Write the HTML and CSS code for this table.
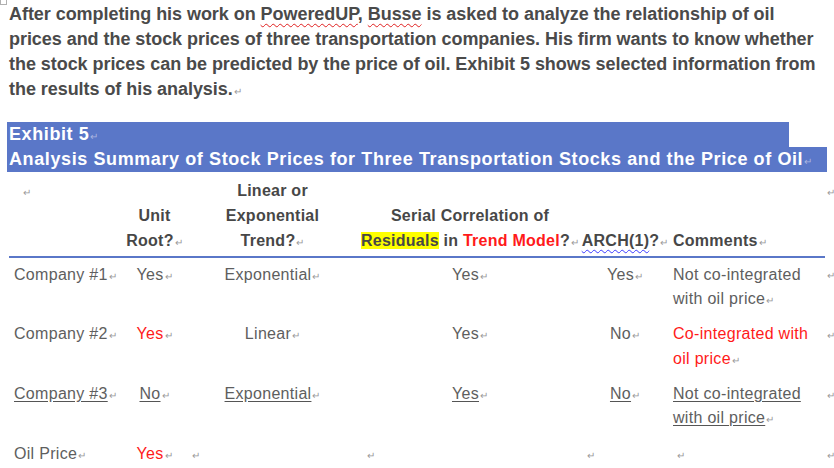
FILE: index.html
```html
<!DOCTYPE html>
<html>
<head>
<meta charset="utf-8">
<link rel="stylesheet" href="styles.css">
</head>
<body>
<span class="anchor"></span>
<p class="intro">After completing his work on <span class="spell">PoweredUP</span>, <span class="spell">Busse</span> is asked to analyze the relationship of oil<br>prices and the stock prices of three transportation companies. His firm wants to know whether<br>the stock prices can be predicted by the price of oil. Exhibit 5 shows selected information from<br>the results of his analysis.<span class="pm">↵</span></p>

<div class="banner">
  <div class="banner-line first">Exhibit 5<span class="pm pm-b">↵</span></div>
  <div class="banner-line second">Analysis Summary of Stock Prices for Three Transportation Stocks and the Price of Oil<span class="pm pm-b">↵</span></div>
</div>

<table class="summary">
  <colgroup>
    <col class="c1"><col class="c2"><col class="c3"><col class="c4"><col class="c5"><col class="c6"><col class="c7">
  </colgroup>
  <thead>
    <tr>
      <th class="h-first"><span class="pm">↵</span></th>
      <th>Unit<br>Root?<span class="pm">↵</span></th>
      <th>Linear or<br>Exponential<br>Trend?<span class="pm">↵</span></th>
      <th>Serial Correlation of<br><span class="hl">Residuals</span> in <span class="red">Trend Model</span>?<span class="pm">↵</span></th>
      <th><span class="gram">ARCH(1)</span>?<span class="pm">↵</span></th>
      <th class="h-left">Comments<span class="pm">↵</span></th>
      <th class="end"><span class="pm">↵</span></th>
    </tr>
  </thead>
  <tbody>
    <tr>
      <td class="name">Company #1<span class="pm">↵</span></td>
      <td>Yes<span class="pm">↵</span></td>
      <td>Exponential<span class="pm">↵</span></td>
      <td>Yes<span class="pm">↵</span></td>
      <td>Yes<span class="pm">↵</span></td>
      <td class="comment">Not co-integrated with oil price<span class="pm">↵</span></td>
      <td class="end"><span class="pm">↵</span></td>
    </tr>
    <tr>
      <td class="name">Company #2<span class="pm">↵</span></td>
      <td class="red">Yes<span class="pm">↵</span></td>
      <td>Linear<span class="pm">↵</span></td>
      <td>Yes<span class="pm">↵</span></td>
      <td>No<span class="pm">↵</span></td>
      <td class="comment red">Co-integrated with oil price<span class="pm">↵</span></td>
      <td class="end"><span class="pm">↵</span></td>
    </tr>
    <tr>
      <td class="name"><u>Company #3</u><span class="pm">↵</span></td>
      <td><u>No</u><span class="pm">↵</span></td>
      <td><u>Exponential</u><span class="pm">↵</span></td>
      <td><u>Yes</u><span class="pm">↵</span></td>
      <td><u>No</u><span class="pm">↵</span></td>
      <td class="comment"><u>Not co-integrated with oil price</u><span class="pm">↵</span></td>
      <td class="end"><span class="pm">↵</span></td>
    </tr>
    <tr>
      <td class="name">Oil Price<span class="pm">↵</span></td>
      <td class="red">Yes<span class="pm">↵</span></td>
      <td class="empty"><span class="pm">↵</span></td>
      <td class="empty"><span class="pm">↵</span></td>
      <td class="empty"><span class="pm">↵</span></td>
      <td class="empty"><span class="pm">↵</span></td>
      <td class="end"><span class="pm">↵</span></td>
    </tr>
  </tbody>
</table>
</body>
</html>
```

FILE: styles.css
```css
html, body {
  margin: 0;
  padding: 0;
  background: #ffffff;
}

body {
  position: relative;
  padding: 2px 0 0 9px;
  font-family: "Liberation Sans", Arial, sans-serif;
  color: #404040;
}

.anchor {
  position: absolute;
  left: 0;
  top: 0;
  width: 5px;
  height: 4px;
  border: 1px solid #b0b0b0;
  border-top: none;
}

.intro {
  margin: 0;
  font-size: 18px;
  font-weight: bold;
  letter-spacing: -0.05px;
  line-height: 25px;
  color: #4a4a4a;
}

.spell {
  text-decoration: underline wavy #e02020;
  text-decoration-thickness: 1px;
  text-underline-offset: 3px;
}

.gram {
  text-decoration: underline wavy #3a3aff;
  text-decoration-thickness: 1px;
  text-underline-offset: 3px;
}

.pm {
  font-size: 10px;
  font-weight: normal;
  letter-spacing: 0;
  line-height: 10px;
  color: #9a9a9a;
  margin-left: 1px;
}

.pm-b {
  color: #aab4e0;
}

.banner {
  margin: 20px 0 0 -2px;
  font-size: 18px;
  font-weight: bold;
  letter-spacing: 0.6px;
  line-height: 25px;
  color: #ffffff;
}

.banner-line {
  background: #5a77c8;
  padding-left: 2px;
  box-sizing: border-box;
  height: 25px;
}

.banner-line.first {
  width: 782px;
}

.banner-line.second {
  width: 820px;
}

.summary {
  margin-top: 6px;
  border-collapse: collapse;
  table-layout: fixed;
  width: 825px;
  font-size: 16px;
}

.c1 { width: 115px; }
.c2 { width: 61px; }
.c3 { width: 175px; }
.c4 { width: 220px; }
.c5 { width: 90px; }
.c6 { width: 155px; }
.c7 { width: 9px; }

.summary th {
  padding: 0 1px 3px;
  font-weight: bold;
  letter-spacing: 0.25px;
  line-height: 25px;
  color: #474747;
  vertical-align: bottom;
  text-align: center;
  white-space: nowrap;
  border-bottom: 2px solid #5a77c8;
}

.summary th.h-first {
  text-align: left;
  vertical-align: top;
  padding-left: 13px;
}

.summary th.h-left {
  text-align: left;
  padding-left: 3px;
}

.summary th.end,
.summary td.end {
  border-bottom: none;
  padding: 4.5px 0 0 1px;
  vertical-align: top;
  text-align: left;
}

.summary th.end {
  padding-top: 0;
}

.summary td {
  padding: 4.5px 2px 6.2px;
  line-height: 24.5px;
  letter-spacing: 0.3px;
  color: #5e5e5e;
  vertical-align: top;
  text-align: center;
  white-space: nowrap;
}

.summary td.name {
  text-align: left;
  padding-left: 5px;
}

.summary td.comment {
  text-align: left;
  white-space: normal;
  padding-left: 3px;
  padding-right: 8px;
}

.summary td.empty {
  text-align: left;
  padding-left: 6px;
}

.summary u {
  text-decoration-color: #555555;
  text-underline-offset: 2px;
}

.hl {
  background: #ffff00;
}

.red,
.summary td.red {
  color: #ff1a1a;
}
```
